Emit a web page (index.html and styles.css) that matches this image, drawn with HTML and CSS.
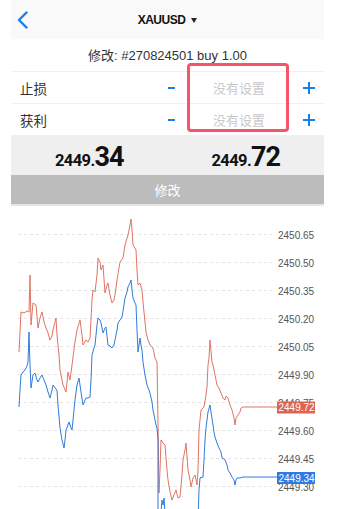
FILE: index.html
```html
<!DOCTYPE html>
<html lang="zh">
<head>
<meta charset="utf-8">
<title>XAUUSD 修改</title>
<link rel="stylesheet" href="styles.css">
</head>
<body>
<div class="page">
  <header class="header">
    <div class="back">
      <svg width="12" height="18" viewBox="0 0 12 18"><path d="M9.5 1.5 L2 9 L9.5 16.5" fill="none" stroke="#1b7ee6" stroke-width="2.4" stroke-linecap="round" stroke-linejoin="round"/></svg>
    </div>
    <div class="title">XAUUSD <span class="caret"></span></div>
    <div></div>
  </header>
  <div class="order">修改: #270824501 buy 1.00</div>
  <div class="row">
    <span class="label">止损</span>
    <span class="minus"></span>
    <span class="value">没有设置</span>
    <span class="plus"></span>
  </div>
  <div class="row last">
    <span class="label">获利</span>
    <span class="minus"></span>
    <span class="value">没有设置</span>
    <span class="plus"></span>
  </div>
  <div class="highlight"></div>
  <div class="prices">
    <div class="price"><span class="small">2449.</span><span class="big">34</span></div>
    <div class="price"><span class="small">2449.</span><span class="big">72</span></div>
  </div>
  <div class="button">修改</div>
  <svg class="chart" width="313" height="303" viewBox="11 206 313 303">
    <g stroke="#e4e4e4" stroke-width="1" stroke-dasharray="3 3">
      <line x1="18" y1="234.5" x2="272" y2="234.5"/>
      <line x1="18" y1="262.5" x2="272" y2="262.5"/>
      <line x1="18" y1="290.5" x2="272" y2="290.5"/>
      <line x1="18" y1="318.5" x2="272" y2="318.5"/>
      <line x1="18" y1="346.5" x2="272" y2="346.5"/>
      <line x1="18" y1="374.5" x2="272" y2="374.5"/>
      <line x1="18" y1="402.5" x2="272" y2="402.5"/>
      <line x1="18" y1="430.5" x2="272" y2="430.5"/>
      <line x1="18" y1="458.5" x2="272" y2="458.5"/>
      <line x1="18" y1="486.5" x2="272" y2="486.5"/>
    </g>
    <g class="axis">
      <text x="278" y="238.5">2450.65</text>
      <text x="278" y="266.5">2450.50</text>
      <text x="278" y="294.5">2450.35</text>
      <text x="278" y="322.5">2450.20</text>
      <text x="278" y="350.5">2450.05</text>
      <text x="278" y="378.5">2449.90</text>
      <text x="278" y="406.5">2449.75</text>
      <text x="278" y="434.5">2449.60</text>
      <text x="278" y="462.5">2449.45</text>
      <text x="278" y="490.5">2449.30</text>
    </g>
    <polyline fill="none" stroke="#e07463" stroke-width="1" stroke-linejoin="round" points="19,352 21,312 24,313 27,311 29,312 30,275 31,325 33,303 36,305 38,328 40,318 42,312 44,322 46,328 48,333 50,340 52,336 53,330 55,322 56,318 57,335 59,355 60,370 63,385 66,392 68,372 70,380 72,365 75,342 77,330 80,320 82,335 83,345 86,340 88,342 90,338 92,300 93,290 95,292 97,275 98,258 100,262 101,270 103,265 105,293 107,285 108,283 110,295 112,303 114,300 115,295 117,280 120,262 123,258 125,245 128,235 130,225 131,219 132,230 133,245 136,250 137,270 138,285 140,283 142,290 143,302 146,332 148,340 150,345 153,348 155,358 157,362 158,423 159,493 160,470 161,440 163,443 165,445 167,470 168,480 170,492 172,500 174,495 176,490 178,498 180,497 182,475 183,460 185,450 186,443 188,470 190,480 191,487 193,478 195,475 197,485 198,470 199,430 201,410 203,408 204,407 206,395 207,387 208,365 209,358 210,340 212,362 213,365 215,375 217,385 219,388 221,393 223,398 225,400 226,396 228,398 230,405 232,410 234,418 235,425 236,418 238,415 240,412 241,408 243,407 277,407"/>
    <polyline fill="none" stroke="#2f7bdc" stroke-width="1" stroke-linejoin="round" points="19,407 20,390 21,375 23,372 25,370 27,366 28,362 29,332 30,365 31,388 33,375 35,373 37,380 38,382 40,378 42,375 44,380 46,385 48,392 50,398 52,390 53,385 55,388 57,390 58,405 60,428 62,440 64,448 65,440 66,430 68,425 69,422 71,428 72,430 74,410 75,400 77,385 79,378 81,392 83,405 85,400 86,398 88,398 90,397 91,380 92,355 94,348 95,345 97,325 98,318 100,320 101,323 103,333 105,328 106,327 108,345 110,346 112,348 114,345 115,340 117,330 118,323 120,320 122,317 124,305 125,298 127,292 128,287 130,283 131,280 132,290 133,298 135,303 136,305 137,330 138,352 139,345 140,338 141,345 142,350 143,362 145,375 147,385 149,390 150,393 152,402 153,410 155,420 156,425 157,428 158,440 158,520"/>
    <polyline fill="none" stroke="#2f7bdc" stroke-width="1" points="161,512 162,500 163,505 164,498 165,512"/>
    <polyline fill="none" stroke="#2f7bdc" stroke-width="1" stroke-linejoin="round" points="198,520 199,490 200,478 203,477 204,460 205,440 206,428 207,420 208,412 210,405 211,412 213,425 214,432 215,437 217,443 219,448 221,452 222,458 224,459 225,460 227,465 228,470 230,473 232,477 234,480 235,485 236,480 237,478 240,478 243,477 277,477"/>
    <rect x="277" y="401.5" width="38" height="12" fill="#dc6453"/>
    <text class="tag" x="278.5" y="411.3">2449.72</text>
    <rect x="277" y="472" width="38" height="12" fill="#2f7be0"/>
    <text class="tag" x="278.5" y="481.8">2449.34</text>
  </svg>
</div>
</body>
</html>
```
FILE: styles.css
```css
* { box-sizing: border-box; }
body {
  margin: 0;
  background: #fff;
  font-family: "Liberation Sans", "Noto Sans CJK SC", sans-serif;
  color: #222;
}
.page {
  position: relative;
  width: 313px;
  margin-left: 11px;
}
.header {
  height: 39px;
  background: #f9f9f9;
  display: grid;
  grid-template-columns: 1fr auto 1fr;
  align-items: center;
}
.back {
  padding-left: 6px;
  display: flex;
  align-items: center;
}
.back svg { display: block; }
.title {
  font-weight: 700;
  font-size: 12px;
  letter-spacing: -0.5px;
  color: #111;
  display: flex;
  align-items: center;
  gap: 6px;
}
.caret {
  width: 0;
  height: 0;
  border-left: 3px solid transparent;
  border-right: 3px solid transparent;
  border-top: 5px solid #222;
  margin-top: 1px;
}
.order {
  height: 33px;
  border-bottom: 1px solid #f0f0f0;
  display: flex;
  align-items: center;
  justify-content: center;
  font-size: 13px;
  color: #333;
  padding-bottom: 1px;
}
.row {
  height: 32px;
  border-bottom: 1px solid #f0f0f0;
  display: grid;
  grid-template-columns: 1fr 7px 104px 12px;
  column-gap: 12px;
  padding: 0 9px;
  align-items: center;
}
.row.last { border-bottom: none; height: 31px; }
.label {
  font-family: "Noto Sans CJK SC", sans-serif;
  font-size: 13.5px;
  color: #333;
}
.value {
  font-family: "Noto Sans CJK SC", sans-serif;
  font-size: 13px;
  color: #c8c8c8;
  text-align: center;
}
.minus {
  height: 2px;
  width: 7px;
  background: #1b7ee6;
}
.plus {
  position: relative;
  width: 12px;
  height: 12px;
}
.plus::before, .plus::after {
  content: "";
  position: absolute;
  background: #1b7ee6;
}
.plus::before { left: 0; top: 5px; width: 12px; height: 2px; }
.plus::after { left: 5px; top: 0; width: 2px; height: 12px; }
.highlight {
  position: absolute;
  left: 176px;
  top: 63px;
  width: 102px;
  height: 69px;
  border: 3px solid #f5556b;
  border-radius: 4px;
}
.prices {
  height: 40px;
  background: #efefef;
  display: flex;
}
.price {
  flex: 1;
  display: flex;
  justify-content: center;
  align-items: baseline;
  padding-top: 6px;
  font-family: "Roboto", "Liberation Sans", sans-serif;
  font-weight: 700;
  color: #111;
}
.price .small { font-size: 16.5px; letter-spacing: -0.6px; }
.price .big { font-size: 27px; letter-spacing: -1px; }
.button {
  height: 31px;
  background: #bcbcbc;
  border-bottom: 2px solid #e6e6e6;
  display: flex;
  align-items: center;
  justify-content: center;
  font-family: "Noto Sans CJK SC", sans-serif;
  font-size: 13px;
  color: #fff;
}
.chart { display: block; }
.axis text {
  font-family: "Liberation Sans", sans-serif;
  font-size: 10px;
  fill: #555;
}
.tag {
  font-family: "Liberation Sans", sans-serif;
  font-size: 10px;
  fill: #fff;
}
```
